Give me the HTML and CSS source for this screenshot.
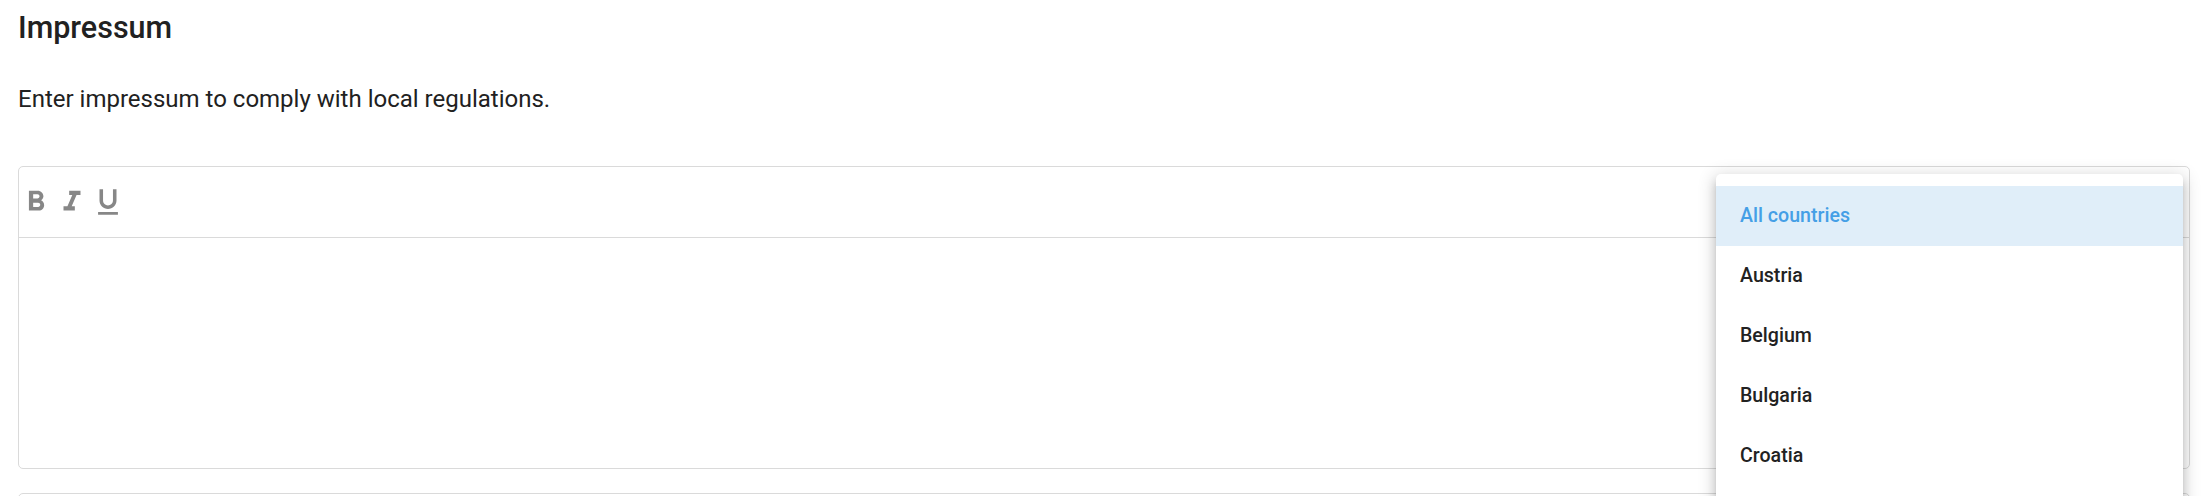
FILE: index.html
```html
<!DOCTYPE html>
<html lang="en">
<head>
<meta charset="UTF-8">
<meta name="viewport" content="width=device-width, initial-scale=1.0">
<title>Settings - Impressum</title>
<link rel="stylesheet" href="styles.css">
</head>
<body>
  <main class="page">
    <h2 class="section-title">Impressum</h2>
    <p class="section-desc">Enter impressum to comply with local regulations.</p>

    <div class="editor">
      <div class="toolbar">
        <button class="tool-btn" title="Bold">
          <svg viewBox="0 0 24 24"><path d="M15.6 10.79c.97-.67 1.65-1.77 1.65-2.79 0-2.26-1.75-4-4-4H7v14h7.04c2.09 0 3.71-1.7 3.71-3.79 0-1.52-.86-2.82-2.15-3.42zM10 6.5h3c.83 0 1.5.67 1.5 1.5s-.67 1.5-1.5 1.5h-3v-3zm3.5 9H10v-3h3.5c.83 0 1.5.67 1.5 1.5s-.67 1.5-1.5 1.5z"/></svg>
        </button>
        <button class="tool-btn" title="Italic">
          <svg viewBox="0 0 24 24"><path d="M10 4v3h2.21l-3.42 8H6v3h8v-3h-2.21l3.42-8H18V4z"/></svg>
        </button>
        <button class="tool-btn" title="Underline">
          <svg viewBox="0 0 24 24"><path d="M12 17c3.31 0 6-2.69 6-6V3h-2.5v8c0 1.93-1.57 3.5-3.5 3.5S8.5 12.93 8.5 11V3H6v8c0 3.31 2.69 6 6 6zm-7 2v2h14v-2H5z"/></svg>
        </button>
      </div>
      <div class="editor-body" contenteditable="true"></div>

      <!-- country picker, opened -->
      <ul class="country-menu">
        <li class="country-item selected">All countries</li>
        <li class="country-item">Austria</li>
        <li class="country-item">Belgium</li>
        <li class="country-item">Bulgaria</li>
        <li class="country-item">Croatia</li>
      </ul>
    </div>

    <div class="editor editor-next"></div>
  </main>
</body>
</html>
```

FILE: styles.css
```css
body {
  margin: 0;
  padding: 0;
  font-family: Roboto, "Liberation Sans", Arial, sans-serif;
  background-color: #ffffff; /* white */
  color: #212121;
  overflow: hidden;
}

.page {
  padding: 10px 20px 0 18px;
}

.section-title {
  font-size: 30.5px;
  line-height: 36px;
  font-weight: 500;
  margin: 0;
}

.section-desc {
  font-size: 24px;
  line-height: 32px;
  margin: 37px 0 51px 0;
}

.editor {
  position: relative;
  border: 1px solid #dadada;
  border-radius: 5px;
}

.toolbar {
  height: 70px;
  display: flex;
  align-items: center;
  gap: 2px;
  border-bottom: 1px solid #dadada;
}

.tool-btn {
  width: 34px;
  height: 34px;
  padding: 0;
  border: none;
  background: none;
  cursor: pointer;
}

.tool-btn svg {
  width: 34px;
  height: 34px;
  display: block;
  fill: #878787; /* grey icons */
}

.editor-body {
  height: 230px;
  outline: none;
}

.editor-next {
  margin-top: 24px;
  height: 200px;
}

/* dropdown menu lying over the editor */
.country-menu {
  position: absolute;
  top: 7px;
  right: 6px;
  width: 467px;
  margin: 0;
  padding: 12px 0 40px 0;
  list-style: none;
  background-color: #ffffff;
  border-radius: 5px;
  box-shadow: 0 5px 5px -3px rgba(0, 0, 0, 0.2),
              0 8px 10px 1px rgba(0, 0, 0, 0.14),
              0 3px 16px 4px rgba(0, 0, 0, 0.12);
  z-index: 10;
}

.country-item {
  height: 60px;
  line-height: 60px;
  padding-left: 24px;
  font-size: 19.6px;
  font-weight: 500;
  color: #222222;
  cursor: pointer;
}

.country-item.selected {
  background-color: #e0eef9; /* light blue */
  color: #459fe6; /* blue */
}
```
